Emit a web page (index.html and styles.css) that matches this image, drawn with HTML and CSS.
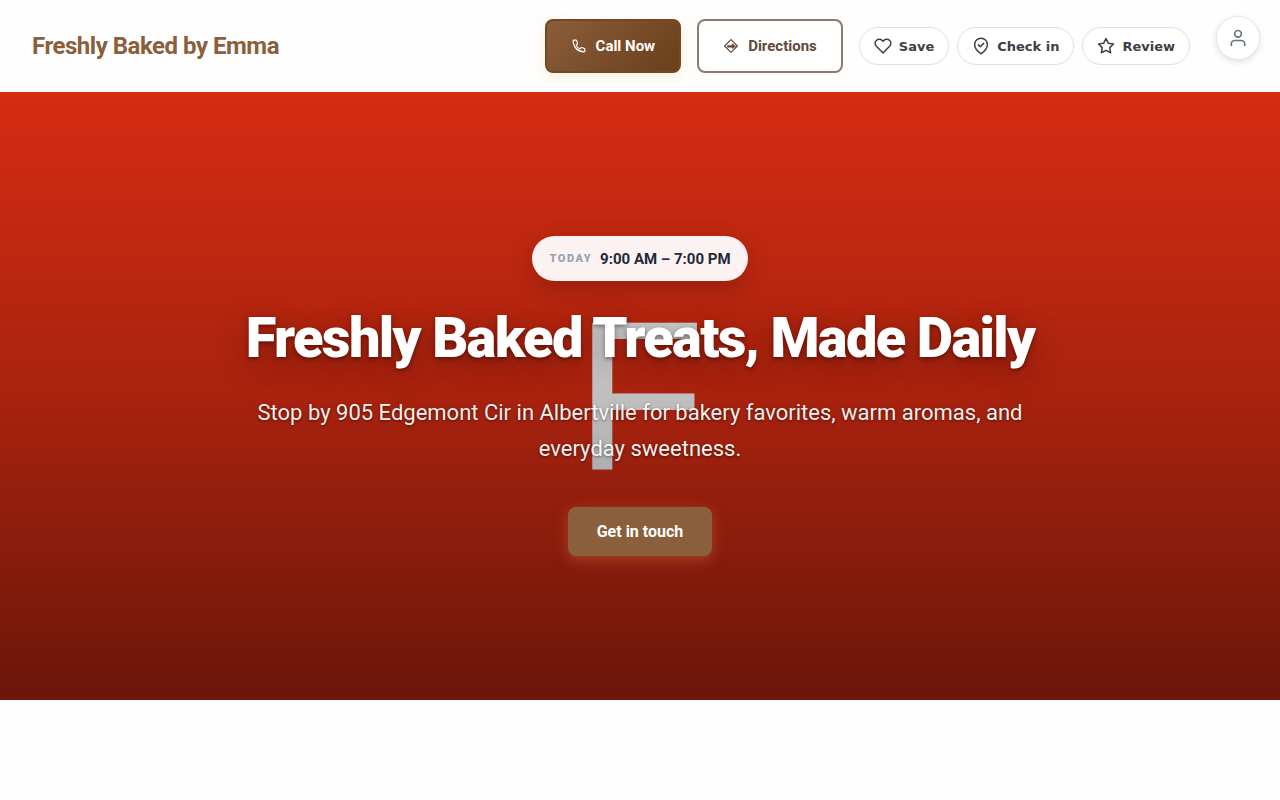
FILE: index.html
```
<!DOCTYPE html>
<html lang="en">
  <head>
    <meta charset="utf-8">
    <meta name="viewport" content="width=device-width, initial-scale=1">
    <title>Freshly Baked by Emma</title>
    <link rel="stylesheet" href="styles.css">
  </head>
  <body>
    <header class="site-header">
      <a class="brand" href="#">Freshly Baked by Emma</a>

      <div class="header-actions">
        <a class="btn btn-call" href="#call">
          <svg width="14" height="14" viewBox="0 0 24 24" fill="none" stroke="currentColor" stroke-width="2" stroke-linecap="round" stroke-linejoin="round" aria-hidden="true">
            <path d="M2 3.500 C2 2.500 2.500 2 3.500 2 H6.500 C7.300 2 8 2.500 8.200 3.300 L9.300 7.500 C9.500 8.200 9.200 8.900 8.600 9.300 L7 10.500 C8.300 13.300 10.700 15.700 13.500 17 L14.700 15.400 C15.100 14.800 15.800 14.500 16.500 14.700 L20.700 15.800 C21.500 16 22 16.700 22 17.500 V20.500 C22 21.500 21.500 22 20.500 22 C10 22 2 14 2 3.500 Z"/>
          </svg>
          Call Now
        </a>
        <a class="btn btn-directions" href="#directions">
          <svg width="14" height="14" viewBox="0 0 24 24" fill="none" stroke="currentColor" stroke-width="2" stroke-linejoin="round" aria-hidden="true">
            <path d="M12 1 23 12 12 23 1 12z"/>
            <path d="M6 14v-3h8V8l6 4.500-6 4V14z" fill="currentColor" stroke-width="1"/>
          </svg>
          Directions
        </a>

        <div class="pills">
          <button class="pill" type="button">
            <svg width="18" height="18" viewBox="0 0 24 24" fill="none" stroke="currentColor" stroke-width="2" stroke-linecap="round" stroke-linejoin="round" aria-hidden="true">
              <path d="M20.840 4.610a5.500 5.500 0 0 0-7.780 0L12 5.670l-1.060-1.060a5.500 5.500 0 0 0-7.780 7.780l1.060 1.060L12 21.230l7.780-7.780 1.060-1.060a5.500 5.500 0 0 0 0-7.780z"/>
            </svg>
            Save
          </button>
          <button class="pill" type="button">
            <svg width="18" height="18" viewBox="0 0 24 24" fill="none" stroke="currentColor" stroke-width="2" stroke-linecap="round" stroke-linejoin="round" aria-hidden="true">
              <path d="M12 22.500s8.500-6 8.500-12.500a8.500 8.500 0 0 0-17 0c0 6.500 8.500 12.500 8.500 12.500z"/>
              <path d="m8.500 10.500 2.500 2.500 4.500-4.500"/>
            </svg>
            Check in
          </button>
          <button class="pill" type="button">
            <svg width="18" height="18" viewBox="0 0 24 24" fill="none" stroke="currentColor" stroke-width="2" stroke-linecap="round" stroke-linejoin="round" aria-hidden="true">
              <path d="m12 2 3.090 6.260L22 9.270l-5 4.870 1.180 6.880L12 17.770l-6.180 3.250L7 14.140 2 9.270l6.910-1.010z"/>
            </svg>
            Review
          </button>
        </div>
      </div>
    </header>

    <button class="account" type="button" aria-label="Account">
      <svg width="20" height="20" viewBox="0 0 24 24" fill="none" stroke="currentColor" stroke-width="2" stroke-linecap="round" stroke-linejoin="round" aria-hidden="true">
        <path d="M20 21v-2a4 4 0 0 0-4-4H8a4 4 0 0 0-4 4v2"/>
        <circle cx="12" cy="7" r="4"/>
      </svg>
    </button>

    <main>
      <section class="hero">
        <div class="hero-letter" aria-hidden="true">F</div>
        <div class="hero-content">
          <div class="hours">
            <span class="hours-label">TODAY</span>
            <span class="hours-time">9:00 AM – 7:00 PM</span>
          </div>
          <h1>Freshly Baked Treats, Made Daily</h1>
          <p class="lead">Stop by 905 Edgemont Cir in Albertville for bakery favorites, warm aromas, and everyday sweetness.</p>
          <a class="cta" href="#contact">Get in touch</a>
        </div>
      </section>
    </main>
  </body>
</html>
```

FILE: styles.css
```
* {
  box-sizing: border-box;
}

body {
  margin: 0;
  background: #fefefe;
  font-family: Roboto, sans-serif;
  color: #1f2937;
}

a {
  text-decoration: none;
}

/* Header */
.site-header {
  display: flex;
  align-items: center;
  justify-content: space-between;
  padding: 19px 90px 19px 32px;
  background: #fefefe;
}

.brand {
  font-size: 24px;
  font-weight: 700;
  letter-spacing: -0.02em;
  color: #8b5e3c;
}

.header-actions {
  display: flex;
  align-items: center;
  gap: 16px;
}

.btn {
  display: flex;
  align-items: center;
  gap: 10px;
  height: 54px;
  padding: 0 24px 0 25px;
  border: 2px solid #8d7b72;
  border-radius: 8px;
  font-size: 15px;
  font-weight: 700;
}

.btn-call {
  border-color: #75491f;
  background: linear-gradient(135deg, #8b5e3c, #6b3e1a) border-box;
  color: #fff;
  box-shadow: 0 4px 14px rgba(240, 190, 110, 0.25);
}

.btn-directions {
  background: #fff;
  color: #634936;
}

.pills {
  display: flex;
  gap: 8px;
}

.pill {
  display: flex;
  align-items: center;
  gap: 7px;
  height: 38px;
  padding: 0 14px;
  border: 1px solid #e0e0e2;
  border-radius: 19px;
  background: #fff;
  font-family: "DejaVu Sans", sans-serif;
  font-size: 13px;
  font-weight: 700;
  color: #3c4043;
}

.account {
  position: fixed;
  top: 16px;
  right: 20px;
  z-index: 10;
  display: flex;
  align-items: center;
  justify-content: center;
  width: 44px;
  height: 44px;
  padding: 0;
  border: 1px solid #e5e7eb;
  border-radius: 50%;
  background: #fff;
  color: #6b7280;
  box-shadow: 0 2px 6px rgba(0, 0, 0, 0.12);
}

/* Hero */
.hero {
  position: relative;
  display: flex;
  align-items: center;
  justify-content: center;
  min-height: 608px;
  padding: 40px 32px;
  background: #e12e13;
}

.hero-letter {
  position: absolute;
  inset: 0;
  display: flex;
  align-items: center;
  justify-content: center;
  font-family: "Liberation Sans", sans-serif;
  font-size: 214px;
  line-height: 216px;
  color: #fff;
}

/* darkens the backdrop so the copy stays readable */
.hero-letter::after {
  content: "";
  position: absolute;
  inset: 0;
  background: linear-gradient(rgba(0, 0, 0, 0.05), rgba(0, 0, 0, 0.25) 50%, rgba(0, 0, 0, 0.53));
}

.hero-content {
  position: relative;
  display: flex;
  flex-direction: column;
  align-items: center;
  max-width: 800px;
  text-align: center;
}

.hours {
  display: flex;
  align-items: center;
  gap: 8px;
  height: 45px;
  margin-bottom: 24px;
  padding: 0 17px;
  border-radius: 23px;
  background: rgba(255, 255, 255, 0.94);
  box-shadow: 0 8px 24px rgba(0, 0, 0, 0.18);
}

.hours-label {
  font-size: 11px;
  font-weight: 900;
  letter-spacing: 0.14em;
  color: #94a3b8;
}

.hours-time {
  font-size: 15px;
  font-weight: 700;
}

h1 {
  margin: 0 0 24px;
  font-size: 56px;
  font-weight: 900;
  line-height: 66px;
  letter-spacing: -0.03em;
  color: #fff;
  text-shadow: 0 2px 4px rgba(0, 0, 0, 0.4), 0 8px 32px rgba(0, 0, 0, 0.3);
}

.lead {
  margin: 0 0 40px;
  font-size: 22px;
  line-height: 36px;
  color: rgba(255, 255, 255, 0.95);
  text-shadow: 0 1px 3px rgba(0, 0, 0, 0.5);
}

.cta {
  display: flex;
  align-items: center;
  height: 49px;
  padding: 0 29px;
  border-radius: 8px;
  background: #8b5e3c;
  font-size: 16px;
  font-weight: 700;
  color: #fff;
  box-shadow: 0 4px 14px rgba(215, 120, 70, 0.4);
}
```
